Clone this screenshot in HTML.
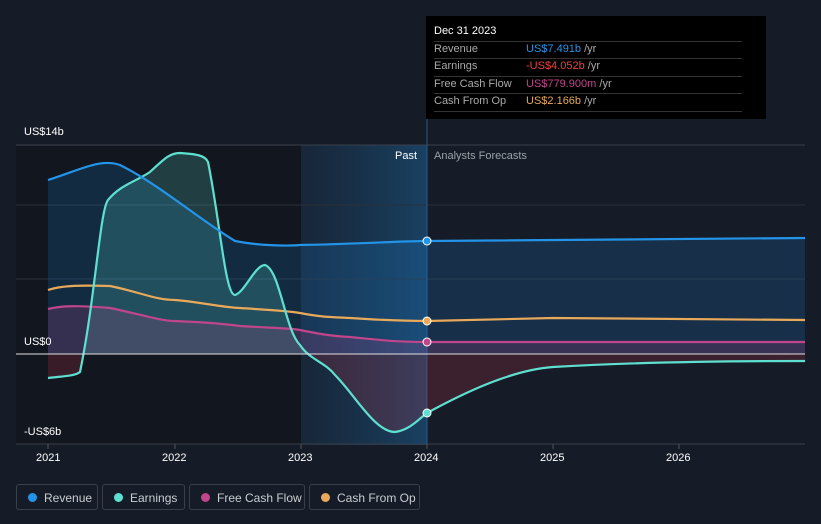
<!DOCTYPE html><html><head><style>
body{margin:0;background:#161c27;width:821px;height:524px;overflow:hidden;font-family:"Liberation Sans",sans-serif;position:relative}
.t{position:absolute;font-size:11px;color:#fff}
.tip{position:absolute;left:426px;top:16px;width:340px;height:103px;background:#000}
.tip div{position:absolute;font-size:11px}
.ln{position:absolute;left:8px;width:308px;height:1px;background:#333}
.leg{position:absolute;top:484px;height:26px;border:1px solid #3a404b;border-radius:3px;font-size:12px;color:#c9ccd1;line-height:26px;box-sizing:border-box}
.leg i{position:absolute;left:11px;top:8px;width:9px;height:9px;border-radius:50%}
.leg span{position:absolute;left:27px;top:0}
</style></head><body>
<svg width="821" height="524" style="position:absolute;left:0;top:0">
<defs><linearGradient id="g" x1="0" x2="1"><stop offset="0" stop-color="#1a3a58" stop-opacity=".35"/><stop offset="1" stop-color="#1a4a72" stop-opacity=".8"/></linearGradient>
<clipPath id="up"><rect x="0" y="0" width="821" height="354"/></clipPath>
<clipPath id="dn"><rect x="0" y="354" width="821" height="200"/></clipPath></defs>
<rect x="16" y="145" width="285" height="300" fill="#12161e"/>
<rect x="301" y="145" width="126" height="300" fill="url(#g)"/>
<line x1="16" y1="145" x2="805" y2="145" stroke="#3a404b"/>
<line x1="16" y1="205" x2="805" y2="205" stroke="#2a303b"/>
<line x1="16" y1="279" x2="805" y2="279" stroke="#2a303b"/>
<line x1="16" y1="444" x2="805" y2="444" stroke="#3a404b"/>
<line x1="427" y1="119" x2="427" y2="444" stroke="#2a5a86"/>
<path d="M48,180 C80,170 100,158 120,165 C160,185 200,220 235,241 C260,246 290,246 300,245 C360,244 400,241 427,241 L805,238 L805,354 L48,354Z" fill="#1e88e5" fill-opacity=".18"/>
<g id="ef"><path d="M48,378 C65,376 75,376 80,372 C95,300 100,210 108,200 C120,185 135,182 150,172 C165,158 170,153 180,153 C195,154 205,155 208,162 C220,220 225,295 235,295 C245,292 255,265 265,265 C280,270 285,330 300,345 C310,360 325,362 335,375 C355,395 375,432 395,432 C410,430 420,418 427,413 C460,395 510,370 553,367 C620,363 700,361 805,361 L805,354 L48,354Z" fill="#5ee0d0" fill-opacity=".2" clip-path="url(#up)"/>
<path d="M48,378 C65,376 75,376 80,372 C95,300 100,210 108,200 C120,185 135,182 150,172 C165,158 170,153 180,153 C195,154 205,155 208,162 C220,220 225,295 235,295 C245,292 255,265 265,265 C280,270 285,330 300,345 C310,360 325,362 335,375 C355,395 375,432 395,432 C410,430 420,418 427,413 C460,395 510,370 553,367 C620,363 700,361 805,361 L805,354 L48,354Z" fill="#c0304a" fill-opacity=".22" clip-path="url(#dn)"/></g>
<path d="M48,309 C60,306 75,305 110,308 C140,314 160,321 175,321 C190,322 210,322 240,326 C270,328 290,328 300,330 C320,334 330,336 350,337 C380,340 395,342 427,342 L805,342 L805,354 L48,354Z" fill="#c0458a" fill-opacity=".2"/>
<path d="M48,290 C60,286 75,285 110,286 C140,292 155,300 175,300 C200,302 220,307 240,308 C270,310 290,311 300,313 C320,317 330,317 350,318 C380,320 400,321 427,321 L553,318 L805,320" fill="none" stroke="#e8a95a" stroke-width="2.2"/>
<path d="M48,309 C60,306 75,305 110,308 C140,314 160,321 175,321 C190,322 210,322 240,326 C270,328 290,328 300,330 C320,334 330,336 350,337 C380,340 395,342 427,342 L805,342" fill="none" stroke="#c0458a" stroke-width="2.2"/>
<path d="M48,378 C65,376 75,376 80,372 C95,300 100,210 108,200 C120,185 135,182 150,172 C165,158 170,153 180,153 C195,154 205,155 208,162 C220,220 225,295 235,295 C245,292 255,265 265,265 C280,270 285,330 300,345 C310,360 325,362 335,375 C355,395 375,432 395,432 C410,430 420,418 427,413 C460,395 510,370 553,367 C620,363 700,361 805,361" fill="none" stroke="#5ee0d0" stroke-width="2.2"/>
<path d="M48,180 C80,170 100,158 120,165 C160,185 200,220 235,241 C260,246 290,246 300,245 C360,244 400,241 427,241 L805,238" fill="none" stroke="#2394e8" stroke-width="2.2"/>
<line x1="16" y1="354" x2="805" y2="354" stroke="#e0e0e0"/>
<circle cx="427" cy="241" r="4" fill="#2394e8" stroke="#fff"/>
<circle cx="427" cy="413" r="4" fill="#5ee0d0" stroke="#fff"/>
<circle cx="427" cy="342" r="4" fill="#c0458a" stroke="#fff"/>
<circle cx="427" cy="321" r="4" fill="#e8a95a" stroke="#fff"/>
<g stroke="#555"><line x1="48" y1="444" x2="48" y2="449"/><line x1="175" y1="444" x2="175" y2="449"/><line x1="301" y1="444" x2="301" y2="449"/><line x1="427" y1="444" x2="427" y2="449"/><line x1="553" y1="444" x2="553" y2="449"/><line x1="679" y1="444" x2="679" y2="449"/></g>
</svg>
<div class="t" style="left:24px;top:126px">US$14b</div>
<div class="t" style="left:24px;top:336px">US$0</div>
<div class="t" style="left:24px;top:426px">-US$6b</div>
<div class="t" style="left:395px;top:150px;color:#fff">Past</div>
<div class="t" style="left:434px;top:150px;color:#9aa0a8">Analysts Forecasts</div>
<div class="t" style="left:36px;top:452px">2021</div>
<div class="t" style="left:162px;top:452px">2022</div>
<div class="t" style="left:288px;top:452px">2023</div>
<div class="t" style="left:414px;top:452px">2024</div>
<div class="t" style="left:540px;top:452px">2025</div>
<div class="t" style="left:666px;top:452px">2026</div>
<div class="tip">
<div style="left:8px;top:9px;color:#fff">Dec 31 2023</div>
<div class="ln" style="top:25px"></div><div class="ln" style="top:42px"></div><div class="ln" style="top:60px"></div><div class="ln" style="top:77px"></div><div class="ln" style="top:95px"></div>
<div style="left:8px;top:27px;color:#aaa">Revenue</div><div style="left:100px;top:27px;color:#2394e8">US$7.491b <span style="color:#aaa">/yr</span></div>
<div style="left:8px;top:44px;color:#aaa">Earnings</div><div style="left:100px;top:44px;color:#f0413b">-US$4.052b <span style="color:#aaa">/yr</span></div>
<div style="left:8px;top:62px;color:#aaa">Free Cash Flow</div><div style="left:100px;top:62px;color:#c0458a">US$779.900m <span style="color:#aaa">/yr</span></div>
<div style="left:8px;top:79px;color:#aaa">Cash From Op</div><div style="left:100px;top:79px;color:#e8a95a">US$2.166b <span style="color:#aaa">/yr</span></div>
</div>
<div class="leg" style="left:16px;width:82px"><i style="background:#2394e8"></i><span>Revenue</span></div>
<div class="leg" style="left:102px;width:83px"><i style="background:#5ee0d0"></i><span>Earnings</span></div>
<div class="leg" style="left:189px;width:116px"><i style="background:#c0458a"></i><span>Free Cash Flow</span></div>
<div class="leg" style="left:309px;width:111px"><i style="background:#e8a95a"></i><span>Cash From Op</span></div>
</body></html>
